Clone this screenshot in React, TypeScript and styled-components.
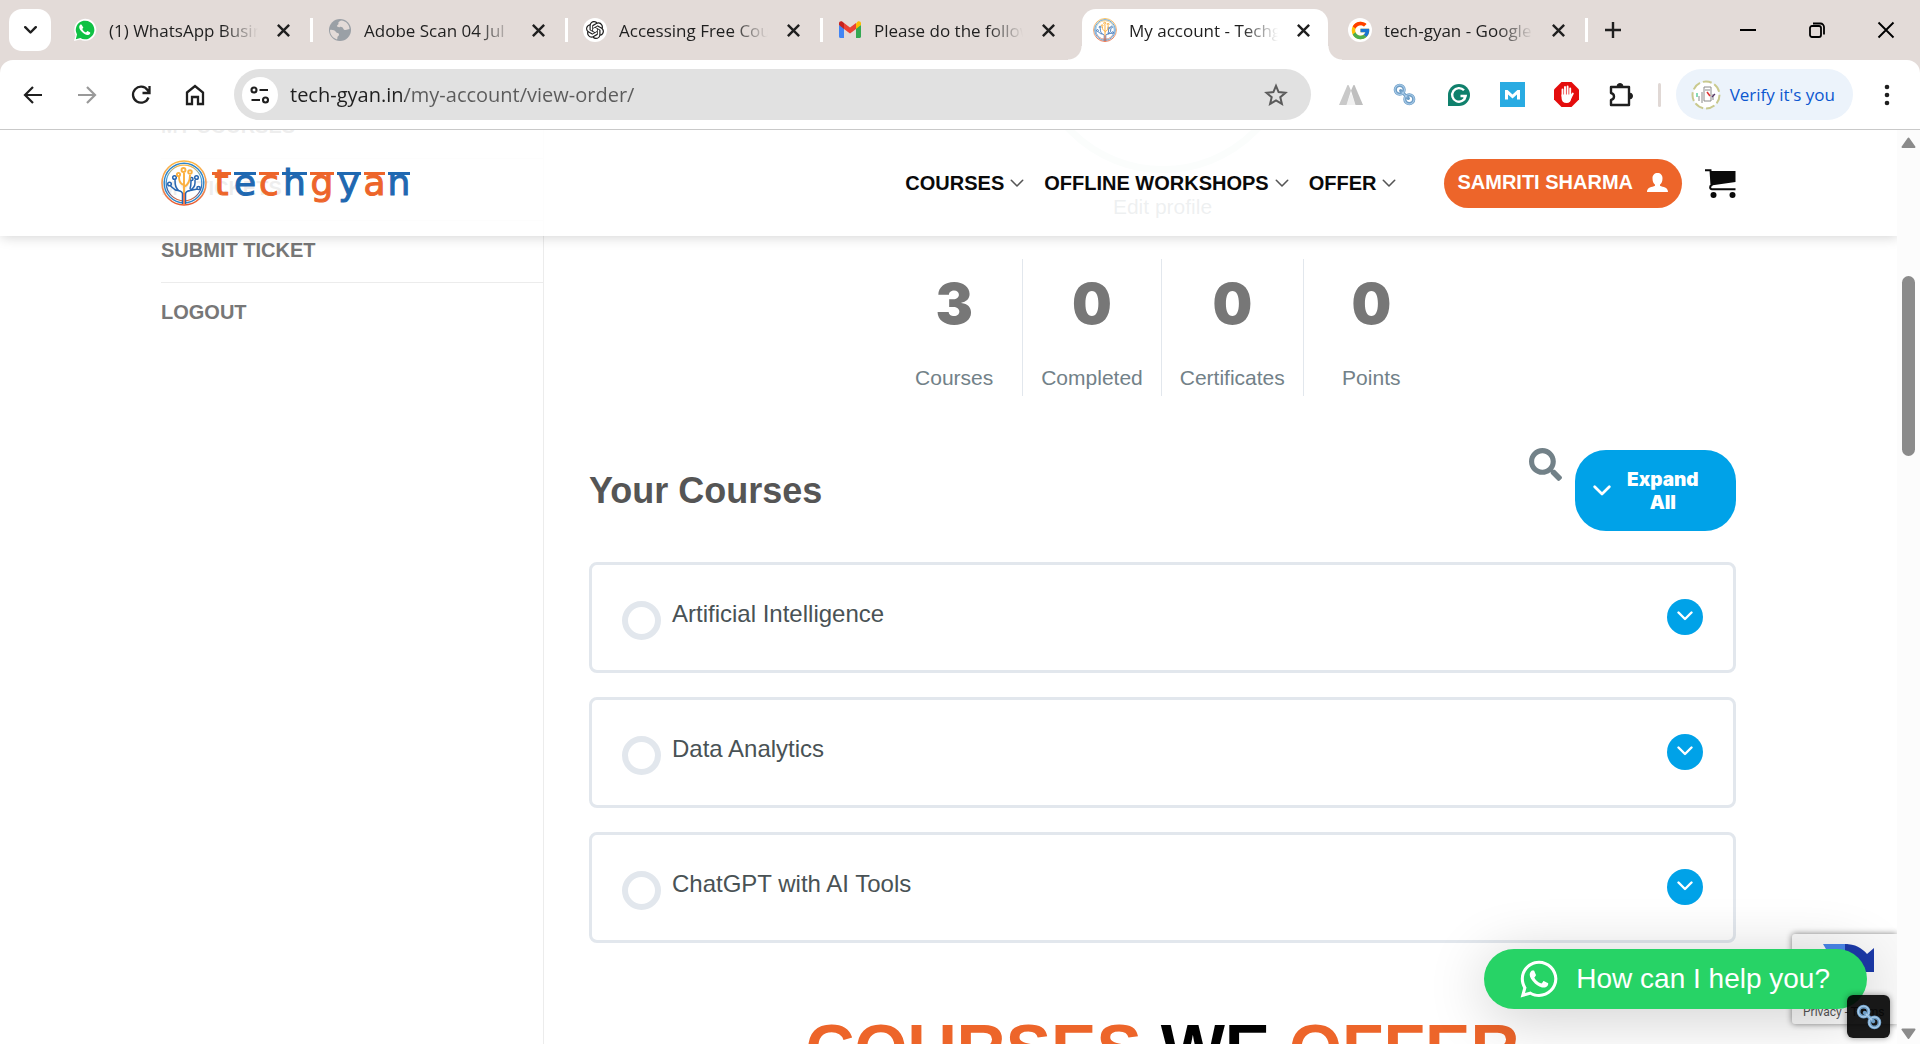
import React from "react";
import styled, { createGlobalStyle, css } from "styled-components";
import { FaWhatsapp, FaSearch } from "react-icons/fa";
import { SiOpenai } from "react-icons/si";
import { FcGoogle } from "react-icons/fc";

const uiFont = `"Open Sans", "Noto Sans", sans-serif`;
const pageFont = `"Liberation Sans", Arial, sans-serif`;
const heavyFont = `Inter, "Liberation Sans", sans-serif`;

const orange = "#ed652a";
const blue = "#1f68b1";
const sky = "#00a2e8";
const rule = "#e2e7ed";

const GlobalStyle = createGlobalStyle`
  *, *::before, *::after { box-sizing: border-box; }
  body { margin: 0; overflow: hidden; background: #fff; font-family: ${pageFont}; }
  button { border: 0; background: none; padding: 0; font: inherit; color: inherit; cursor: pointer; }
  a { color: inherit; text-decoration: none; }
  h1, h2, p, ul, dl, dd { margin: 0; padding: 0; }
  ul { list-style: none; }
  svg { display: block; flex: none; }
`;

const Window = styled.div`
  display: flex;
  flex-direction: column;
  height: 100vh;
  background: #e3dbd8;
`;

/* ---------- tab strip ---------- */

const TabStrip = styled.div`
  display: flex;
  align-items: flex-start;
  height: 60px;
  padding-left: 9px;
  color: #1f1f1f;
`;

const TabSearch = styled.button`
  display: grid;
  place-items: center;
  width: 42px;
  height: 42px;
  margin: 9px 6px 0 0;
  border-radius: 13px;
  background: #fff;
`;

const Tab = styled.div<{ $active?: boolean; $divider?: boolean }>`
  position: relative;
  display: flex;
  align-items: center;
  width: 255px;
  height: 51px;
  margin-top: 9px;
  padding: 0 17px 9px 16px;
  ${(p) =>
    p.$divider &&
    css`
      &::after {
        content: "";
        position: absolute;
        top: 9px;
        right: -1px;
        width: 3px;
        height: 24px;
        background: #fff;
      }
    `}
  ${(p) =>
    p.$active &&
    css`
      &::before {
        content: "";
        position: absolute;
        inset: 0 4px 0 5px;
        border-radius: 14px 14px 0 0;
        background: #fff;
      }
      &::after {
        content: "";
        position: absolute;
        bottom: 0;
        left: -9px;
        right: -10px;
        height: 14px;
        background: radial-gradient(circle at 0 0, transparent 13px, #fff 14px) left / 14px 14px no-repeat,
          radial-gradient(circle at 100% 0, transparent 13px, #fff 14px) right / 14px 14px no-repeat;
      }
      & > * {
        position: relative;
        z-index: 1;
      }
    `}
`;

const Favicon = styled.span`
  display: grid;
  place-items: center;
  width: 24px;
  height: 24px;
  margin-right: 12px;
`;

const Disc = styled.span`
  display: grid;
  place-items: center;
  width: 24px;
  height: 24px;
  border-radius: 50%;
  background: #fff;
`;

const TabTitle = styled.span`
  flex: 1;
  padding-top: 2px;
  overflow: hidden;
  white-space: nowrap;
  font: 17px/26px ${uiFont};
  mask-image: linear-gradient(to right, #000 calc(100% - 36px), transparent);
`;

const TabClose = styled.button`
  display: grid;
  place-items: center;
  width: 24px;
  height: 24px;
  margin-left: 13px;
`;

const StripButton = styled.button<{ $wide?: boolean }>`
  display: grid;
  place-items: center;
  width: ${(p) => (p.$wide ? 69 : 52)}px;
  height: 60px;
`;

const WindowControls = styled.div`
  display: flex;
  margin-left: auto;
  color: #000;
`;

/* ---------- toolbar ---------- */

const Toolbar = styled.div`
  display: flex;
  align-items: center;
  height: 70px;
  padding: 0 6px;
  border-bottom: 1px solid #c9c9c9;
  border-radius: 13px 13px 0 0;
  background: #fff;
  color: #1f1f1f;
`;

const ToolButton = styled.button<{ $muted?: boolean }>`
  display: grid;
  place-items: center;
  width: 54px;
  height: 51px;
  opacity: ${(p) => (p.$muted ? 0.45 : 1)};
`;

const Omnibox = styled.div`
  display: flex;
  align-items: center;
  flex: 1;
  height: 51px;
  margin: 0 13px 0 12px;
  padding: 0 8px;
  border-radius: 26px;
  background: #e1e1e1;
`;

const SiteInfo = styled.button`
  display: grid;
  place-items: center;
  width: 36px;
  height: 36px;
  margin-right: 12px;
  border-radius: 50%;
  background: #fff;
`;

const Address = styled.input`
  flex: 1;
  min-width: 0;
  padding: 0;
  border: 0;
  outline: 0;
  font: 20px/30px ${uiFont};
  color: #5b5b5b;
  background: linear-gradient(to right, #1f1f1f 115px, #5b5b5b 115px);
  background-clip: text;
  -webkit-text-fill-color: transparent;
`;

const ToolDivider = styled.span`
  width: 3px;
  height: 24px;
  margin: 0 15px 0 10px;
  border-radius: 2px;
  background: #e0d8d5;
`;

const ProfilePill = styled.button`
  display: flex;
  align-items: center;
  gap: 9px;
  height: 51px;
  margin-right: 7px;
  padding: 0 18px 0 15px;
  border-radius: 26px;
  background: #ecf3fb;
  color: #0b57d0;
  font: 17px/26px ${uiFont};
  white-space: nowrap;
`;

/* ---------- page ---------- */

const Viewport = styled.div`
  position: relative;
  display: flex;
  flex: 1;
  min-height: 0;
  background: #fff;
`;

const Page = styled.div`
  position: relative;
  flex: 1;
  min-width: 0;
  overflow: hidden;
`;

const SiteHeader = styled.header`
  position: absolute;
  inset: 0 0 auto 0;
  z-index: 2;
  background: rgba(255, 255, 255, 0.88);
  box-shadow: 1px 1px 12px rgba(0, 0, 0, 0.18);
`;

const Container = styled.div`
  display: flex;
  width: 100%;
  max-width: 1575px;
  margin: 0 auto;
`;

const HeaderInner = styled(Container)`
  align-items: center;
  height: 106px;
`;

const Brand = styled.a`
  display: flex;
  align-items: center;
  gap: 5px;
`;

const Wordmark = styled.span`
  display: flex;
  gap: 3px;
  font: 36px/46px "DejaVu Sans", sans-serif;
`;

const Letter = styled.span<{ $tone: string; $w: number }>`
  display: flex;
  justify-content: center;
  width: ${(p) => p.$w}px;
  color: ${(p) => p.$tone};
  -webkit-text-stroke: 1px ${(p) => p.$tone};
  background: linear-gradient(${(p) => p.$tone}, ${(p) => p.$tone}) 0 12px / 100% 3px no-repeat;
`;

const MainNav = styled.nav`
  margin-left: auto;

  ul {
    display: flex;
    gap: 20px;
  }
`;

const NavLink = styled.a`
  display: flex;
  align-items: center;
  gap: 6px;
  font-size: 20px;
  line-height: 24px;
  font-weight: 700;
  color: #0a0a0a;
`;

const AccountLink = styled.a`
  display: flex;
  align-items: center;
  gap: 14px;
  height: 49px;
  margin: 0 23px 0 48px;
  padding: 0 14px 2px 13px;
  border-radius: 25px;
  background: ${orange};
  color: #fff;
  font-size: 20px;
  line-height: 24px;
  font-weight: 700;
`;

/* The page is scrolled down, so its first part sits above the viewport. */
const Body = styled(Container)`
  margin-top: -223px;
`;

const Sidebar = styled.nav`
  flex: 0 0 383px;
  min-height: 1300px;
  padding-top: 190px;
  border-right: 1px solid #ececec;
`;

const SideItem = styled.li`
  display: flex;
  align-items: center;
  height: 62px;
  padding-bottom: 4px;
  border-bottom: 1px solid #ececec;
  font-size: 20px;
  line-height: 24px;
  font-weight: 700;
  color: #777;

  &:last-child {
    border-bottom: 0;
  }
`;

const Main = styled.main`
  flex: 1;
  min-width: 0;
  padding-left: 45px;
`;

const Profile = styled.section`
  display: flex;
  flex-direction: column;
  align-items: center;
`;

const Avatar = styled.div`
  width: 266px;
  height: 266px;
  border: 7px solid #d8e8e5;
  border-radius: 50%;
`;

const EditLink = styled.a`
  margin: 22px 0 40px;
  font-size: 21px;
  line-height: 24px;
  color: #728188;
`;

const Stats = styled.dl`
  display: flex;
`;

const Stat = styled.div`
  display: flex;
  flex-direction: column-reverse;
  justify-content: flex-end;
  min-width: 136px;
  height: 137px;
  padding: 0 18px;
  text-align: center;

  & + & {
    border-left: 1px solid ${rule};
  }
`;

const StatValue = styled.dd`
  font: 900 56px/90px ${heavyFont};
  color: #777;
`;

const StatLabel = styled.dt`
  padding-top: 13px;
  font-size: 21px;
  line-height: 32px;
  color: #728188;
`;

const CoursesHead = styled.div`
  display: flex;
  align-items: center;
  margin: 52px 0 29px;
`;

const CoursesTitle = styled.h2`
  flex: 1;
  font-size: 36px;
  line-height: 48px;
  color: #555;
`;

const SearchButton = styled.button`
  margin: 0 13px 52px 0;
  color: #728188;
`;

const ExpandAll = styled.button`
  display: flex;
  align-items: center;
  gap: 16px;
  width: 161px;
  height: 81px;
  padding: 0 34px 0 18px;
  border-radius: 31px;
  background: ${sky};
  color: #fff;
  font: 900 19px/23px ${heavyFont};
`;

const CourseList = styled.ul`
  display: grid;
  gap: 24px;
`;

const CourseCard = styled.li`
  display: flex;
  align-items: center;
  height: 111px;
  padding: 0 30px;
  border: 3px solid ${rule};
  border-radius: 8px;
`;

const Progress = styled.span`
  width: 39px;
  height: 39px;
  margin: 6px 11px 0 0;
  border: 6px solid #e2e7ed;
  border-radius: 50%;
`;

const CourseLink = styled.a`
  flex: 1;
  padding-bottom: 8px;
  font-size: 24px;
  line-height: 32px;
  color: #495255;
`;

const Toggle = styled.button`
  display: grid;
  place-items: center;
  width: 36px;
  height: 36px;
  margin-bottom: 2px;
  padding-bottom: 2px;
  border-radius: 50%;
  background: ${sky};
  color: #fff;
`;

const OfferTitle = styled.h1`
  margin-top: 66px;
  font-size: 68px;
  line-height: 78px;
  text-align: center;
  white-space: nowrap;
  color: ${orange};

  em {
    font-style: normal;
    color: #000;
  }
`;

/* ---------- floating widgets ---------- */

const Captcha = styled.aside`
  position: absolute;
  right: 0;
  bottom: 20px;
  z-index: 3;
  display: flex;
  flex-direction: column;
  justify-content: space-between;
  width: 105px;
  height: 90px;
  padding: 10px 11px 3px;
  border-radius: 3px 0 0 3px;
  background: #f9f9f9;
  box-shadow: 0 0 6px #808080;
  font: 12px/18px Roboto, sans-serif;
  color: #555;
  white-space: nowrap;

  svg {
    margin-left: 20px;
  }
`;

const ChatButton = styled.button`
  position: absolute;
  right: 30px;
  bottom: 35px;
  z-index: 4;
  display: flex;
  align-items: center;
  gap: 16px;
  height: 60px;
  padding: 0 37px 0 34px;
  border-radius: 30px;
  background: #27d366;
  box-shadow: 0 8px 60px rgba(0, 0, 0, 0.2);
  color: #fff;
  font-size: 28px;
  line-height: 32px;
  white-space: nowrap;
`;

const LinkBadge = styled.button`
  position: absolute;
  right: 7px;
  bottom: 6px;
  z-index: 5;
  display: grid;
  place-items: center;
  width: 43px;
  height: 43px;
  border-radius: 6px;
  background: rgba(0, 0, 0, 0.9);
  box-shadow: 0 0 6px rgba(0, 0, 0, 0.4);
`;

const ScrollBar = styled.div`
  display: flex;
  flex-direction: column;
  align-items: center;
  width: 23px;
  padding: 7px 0 5px;
  background: #fcfcfc;
`;

const Thumb = styled.span`
  flex: 180 0 0;
  width: 13px;
  border-radius: 7px;
  background: #8b8b8b;
`;

const Track = styled.span<{ $share: number }>`
  flex: ${(p) => p.$share} 0 0;
`;

/* ---------- drawings ---------- */

const line = { fill: "none", stroke: "currentColor" } as const;

const Chevron = ({ w, stroke = 2, color = "currentColor" }: { w: number; stroke?: number; color?: string }) => (
  <svg width={w} height={(w * 10) / 16} viewBox="0 0 16 10" fill="none" stroke={color} strokeWidth={stroke} strokeLinecap="round" strokeLinejoin="round">
    <path d="M1.5 1.5 8 8l6.500-6.500" />
  </svg>
);

const Cross = ({ size, stroke }: { size: number; stroke: number }) => (
  <svg width={size} height={size} viewBox="0 0 16 16" {...line} strokeWidth={stroke}>
    <path d="M2 2l12 12M14 2 2 14" />
  </svg>
);

const WhatsAppMark = () => (
  <svg width="24" height="24" viewBox="0 0 24 24">
    <path d="M1 23l1.600-6A11 11 0 1 1 7 21.400z" fill="#fff" />
    <path d="M2.800 21.200 4 16.600A9.300 9.300 0 1 1 7.400 20z" fill="#0fc144" />
    <path d="M8.600 6.800c-.4-.5-1-.4-1.400 0-2 2-.6 4.700 1.600 7s4.900 3.900 7 3c1.400-.7 1.600-1.600 1.400-2.300l-2.700-1.400c-.5 0-1 1.300-1.500 1.300-1.200-.2-3.400-2.300-3.700-3.500 0-.5 1-1 1-1.500z" fill="#fff" />
  </svg>
);

const GlobeMark = () => (
  <svg width="24" height="24" viewBox="0 0 24 24">
    <circle cx="12" cy="12" r="11" fill="#9aa0a6" />
    <path d="M13 2.500c-1 1-3 1-2.500 3 .2 1.300-1.500 1-1.500 2.500 0 1 2 1.500 3 1s3 .5 3.500 2 3 1 4 .5l2-.5c0-4-3-8-8.500-8.500zM2 12c2-.5 5 .5 6 2s3 .5 3 2.500-2 1.500-1.500 3.500l-.5 1.500C5 20 2 17 2 12z" fill="#e3dbd8" />
  </svg>
);

const GmailMark = () => (
  <svg width="24" height="24" viewBox="0 0 24 24">
    <path d="M1 7v11.500c0 .8.600 1.500 1.500 1.500H6V9z" fill="#4285f4" />
    <path d="M18 9v11h3.500c.9 0 1.500-.7 1.500-1.500V7z" fill="#34a853" />
    <path d="M18 5.500V11l5-4V5.500c0-2-2-2.800-3.500-1.700z" fill="#fbbc04" />
    <path d="M6 11V5l6 4.500L18 5v6l-6 4.500z" fill="#ea4335" />
    <path d="M1 5.500V7l5 4V5L4.500 3.800C3 2.700 1 3.500 1 5.500z" fill="#c5221f" />
  </svg>
);

const TreeMark = ({ size }: { size: number }) => (
  <svg width={size} height={size} viewBox="0 0 46 46" fill="none">
    <defs>
      <linearGradient id="ring" x1="0" y1="0" x2="0" y2="1">
        <stop offset="0" stopColor="#fbb743" />
        <stop offset=".35" stopColor="#4aa3dc" />
        <stop offset=".7" stopColor="#2a5fb0" />
        <stop offset="1" stopColor="#ed652a" />
      </linearGradient>
      <linearGradient id="outer" x1="0" y1="0" x2="0" y2="1">
        <stop offset="0" stopColor="#fbb743" />
        <stop offset=".6" stopColor="#f0935a" />
        <stop offset="1" stopColor="#e8582f" />
      </linearGradient>
    </defs>
    <circle cx="23" cy="23" r="22" stroke="url(#outer)" strokeWidth="1.600" />
    <circle cx="23" cy="23" r="19.800" stroke="#2f86c9" strokeWidth="1.400" />
    <circle cx="23" cy="23" r="17.800" stroke="url(#ring)" strokeWidth="1.200" />
    <g stroke="#2765b0" strokeWidth="1.500">
      <path d="M21.500 44V34c0-4-5-3-7-4l-5-4M24.500 44V34c0-4 5-3 7-4l5-1M18 31c-3-3-4-5-4-11M28 31c4-2 6-4 6-8v-3M29 29c1-3 1-5 1-8" />
      <circle cx="8.500" cy="24" r="1.800" />
      <circle cx="13.500" cy="17.500" r="1.800" />
      <circle cx="37.500" cy="28" r="1.600" />
      <circle cx="35.500" cy="17.500" r="1.800" />
      <circle cx="30.500" cy="19" r="1.500" />
    </g>
    <g stroke="#fbb040" strokeWidth="1.900">
      <path d="M23 34V13M23 25c-4-1-5-4-5-8M23 27c4-2 6-6 6-12" />
      <circle cx="22.500" cy="10" r="2" />
      <circle cx="17.500" cy="14.500" r="1.600" />
      <circle cx="29" cy="12" r="1.800" />
    </g>
    <path d="M23 33v12" stroke="#ef7d4d" strokeWidth="2" />
  </svg>
);

const ChainMark = ({ size }: { size: number }) => (
  <svg width={size} height={size} viewBox="0 0 24 24" fill="none">
    <g stroke="#6d9dc6" strokeWidth="3.400">
      <circle cx="7" cy="7" r="4.600" />
      <circle cx="17" cy="17" r="4.600" />
      <path d="m8 8 8 8" strokeLinecap="round" />
    </g>
    <g stroke="#a9cbe8" strokeWidth="1.200">
      <circle cx="7" cy="7" r="5" />
      <circle cx="17" cy="17" r="5" />
      <path d="m9 9 6 6" />
    </g>
  </svg>
);

const StarMark = () => (
  <svg width="24" height="24" viewBox="0 0 24 24" {...line} strokeWidth="2" color="#5b5b5b">
    <path d="m12 2.800 2.600 6.300 6.900.6-5.200 4.500 1.600 6.700L12 17.300l-5.900 3.600 1.600-6.700-5.200-4.500 6.900-.6z" />
  </svg>
);

const SlopesMark = () => (
  <svg width="24" height="22" viewBox="0 0 24 22">
    <path d="M12 9 7.500 21h9z" fill="#f1f1f1" />
    <path d="M8.500 1h1L12 6.500 7.500 21H0z" fill="#c9c9c9" />
    <path d="M15.500 1h-1L12 6.500 16.500 21H24z" fill="#bfbfbf" />
  </svg>
);

const GrammarMark = () => (
  <svg width="24" height="24" viewBox="0 0 24 24">
    <path d="M1 23V12A11 11 0 1 1 12 23z" fill="#0f806c" />
    <path d="M17 7.300A6.800 6.800 0 1 0 18.700 13H13.500M17.500 15.500v-2.500" fill="none" stroke="#fff" strokeWidth="2.300" />
  </svg>
);

const PeaksMark = () => (
  <svg width="25" height="25" viewBox="0 0 25 25">
    <path d="M0 0h25v25H0z" fill="#29abe2" />
    <path d="M5 17.500V8h2.600l4.900 4.500L17.400 8H20v9.500h-3v-5L12.500 16.500 8 12.500v5z" fill="#fff" />
  </svg>
);

const StopHandMark = () => (
  <svg width="25" height="25" viewBox="0 0 25 25">
    <path d="M7.500 0h10L25 7.500v10L17.500 25h-10L0 17.500v-10z" fill="#e40d0d" />
    <g stroke="#fff" strokeWidth="1.900" strokeLinecap="round" fill="none">
      <path d="M8.500 14V7.500M11 13V5M13.600 13V4.500M16.200 14V6.500M18.800 11.500 16 17" />
    </g>
    <path d="M7.550 12.500h9.600v4c0 2.600-1.600 4.500-4.500 4.500-3.300 0-5.100-2-5.100-5z" fill="#fff" />
  </svg>
);

const PuzzleMark = () => (
  <svg width="26" height="26" viewBox="0 0 26 26" {...line} strokeWidth="2.400" strokeLinejoin="round">
    <path d="M3 5h18v18H3v-5c4-1 4-6 0-7z" />
    <path d="M9 4.500a3 3 0 0 1 6 0zM21.500 11a3 3 0 0 1 0 6z" fill="currentColor" strokeWidth="1" />
  </svg>
);

const AvatarMark = () => (
  <svg width="30" height="30" viewBox="0 0 30 30" fill="none">
    <circle cx="15" cy="15" r="13" fill="#fff" />
    <circle cx="15" cy="15" r="13.500" stroke="#c9c98e" strokeWidth="2" strokeDasharray="9 3" />
    <path d="M13 7h7v14h-7zM11 23V12M14 10h5M8 21v-5M22 20v-6" stroke="#8a8a8a" strokeWidth="1" />
    <path d="m16 12 3 4" stroke="#d33" strokeWidth="1.600" />
    <path d="M6 13v4" stroke="#5c9" strokeWidth="1.400" />
    <path d="m21 17 3-3" stroke="#536" strokeWidth="1.200" />
  </svg>
);

const CartMark = () => (
  <svg width="31" height="29" viewBox="0 0 31 29" fill="#0a0a0a">
    <path d="M5.500 2h25v11L6 16.500z" />
    <path d="M0 1.200h5.500l1 15c-2 .6-1.800 4 .5 4h23.500" fill="none" stroke="#0a0a0a" strokeWidth="2" />
    <circle cx="8.500" cy="26" r="3" />
    <circle cx="27.500" cy="26" r="3" />
  </svg>
);

const PersonMark = () => (
  <svg width="21" height="19" viewBox="0 0 21 19" fill="#fff">
    <path d="M10.500 0c3 0 5 2 5 5.200 0 3.300-1 5-2.400 6.300-.4 1 0 1.500 1 1.800 4 1 6.900 2 6.900 5.700H0c0-3.700 2.900-4.700 6.900-5.700 1-.3 1.400-.8 1-1.800-1.400-1.300-2.400-3-2.400-6.300C5.500 2 7.500 0 10.500 0z" />
  </svg>
);

const CaptchaMark = () => (
  <svg width="51" height="44" viewBox="0 0 51 44">
    <path d="M0 0h25v13C19 13 15 17 13 22z" fill="#4a86ea" />
    <path d="M22 0c10 0 17 4 22 10l7-6v24H28l8-8c-3-5-8-8-14-8z" fill="#1c3aa9" />
    <path d="M0 22h12c0 8 4 12 10 12s8-2 10-5l8 8c-5 5-11 7-18 7C8 44 0 34 0 22z" fill="#ababab" />
  </svg>
);

const Arrow = ({ down }: { down?: boolean }) => (
  <svg width="15" height="11" viewBox="0 0 15 11" fill="#8b8b8b" stroke="#8b8b8b" strokeWidth="2" strokeLinejoin="round">
    <path d={down ? "M1.500 1.500h12L7.500 10z" : "M7.500 1.500l6 8.500h-12z"} />
  </svg>
);

/* ---------- data ---------- */

const tabs = [
  { title: "(1) WhatsApp Business", icon: <WhatsAppMark />, divider: true },
  { title: "Adobe Scan 04 Jul", icon: <GlobeMark />, divider: true },
  { title: "Accessing Free Course", icon: <Disc><SiOpenai size={18} /></Disc>, divider: true },
  { title: "Please do the following", icon: <GmailMark /> },
  { title: "My account - Techgyan", icon: <TreeMark size={24} />, active: true },
  { title: "tech-gyan - Google", icon: <Disc><FcGoogle size={21} /></Disc>, divider: true },
];

const extensions = [
  { name: "Slopes", icon: <SlopesMark /> },
  { name: "Link", icon: <ChainMark size={23} /> },
  { name: "Grammar", icon: <GrammarMark /> },
  { name: "Mail", icon: <PeaksMark /> },
  { name: "Ad block", icon: <StopHandMark /> },
  { name: "Extensions", icon: <PuzzleMark /> },
];

const letters: [string, number][] = [
  ["t", 19], ["e", 22], ["c", 20], ["h", 25], ["g", 24], ["y", 24], ["a", 21], ["n", 22],
];

const stats: [string, string][] = [
  ["Courses", "3"],
  ["Completed", "0"],
  ["Certificates", "0"],
  ["Points", "0"],
];

const courses = ["Artificial Intelligence", "Data Analytics", "ChatGPT with AI Tools"];

export default function App() {
  return (
    <Window>
      <GlobalStyle />
      <TabStrip>
        <TabSearch aria-label="Search tabs"><Chevron w={13} stroke={3} /></TabSearch>
        {tabs.map((t) => (
          <Tab key={t.title} $active={t.active} $divider={t.divider}>
            <Favicon>{t.icon}</Favicon>
            <TabTitle>{t.title}</TabTitle>
            <TabClose aria-label="Close tab"><Cross size={15} stroke={2.6} /></TabClose>
          </Tab>
        ))}
        <StripButton aria-label="New tab">
          <svg width="16" height="16" viewBox="0 0 16 16" {...line} strokeWidth="2.400"><path d="M8 0v16M0 8h16" /></svg>
        </StripButton>
        <WindowControls>
          <StripButton $wide aria-label="Minimize">
            <svg width="16" height="2" viewBox="0 0 16 2" {...line} strokeWidth="2"><path d="M0 1h16" /></svg>
          </StripButton>
          <StripButton $wide aria-label="Restore">
            <svg width="16" height="16" viewBox="0 0 16 16" {...line} strokeWidth="1.800">
              <rect x="1" y="4" width="11" height="11" rx="2" />
              <path d="M4 1.500h7.500a3.500 3.500 0 0 1 3.500 3.500v7.500" />
            </svg>
          </StripButton>
          <StripButton $wide aria-label="Close"><Cross size={20} stroke={1.5} /></StripButton>
        </WindowControls>
      </TabStrip>

      <Toolbar>
        <ToolButton aria-label="Back">
          <svg width="20" height="18" viewBox="0 0 20 18" {...line} strokeWidth="2.200"><path d="M19 9H2M10 1 2 9l8 8" /></svg>
        </ToolButton>
        <ToolButton aria-label="Forward" $muted>
          <svg width="20" height="18" viewBox="0 0 20 18" {...line} strokeWidth="2.200"><path d="M1 9h17M10 1l8 8-8 8" /></svg>
        </ToolButton>
        <ToolButton aria-label="Reload">
          <svg width="20" height="20" viewBox="0 0 20 20" {...line} strokeWidth="2.300">
            <path d="M17.500 12.500A8 8 0 1 1 16.500 5l1.500 2M18.500 1v7h-7" />
          </svg>
        </ToolButton>
        <ToolButton aria-label="Home">
          <svg width="20" height="22" viewBox="0 0 20 22" {...line} strokeWidth="2.300">
            <path d="M2 8.500 10 2l8 6.500V20h-5v-7H7v7H2z" />
          </svg>
        </ToolButton>
        <Omnibox>
          <SiteInfo aria-label="Site information">
            <svg width="20" height="18" viewBox="0 0 20 18" {...line} strokeWidth="2.100">
              <circle cx="4" cy="4" r="2.500" /><path d="M9.500 4H18M1.500 14H10" /><circle cx="15.500" cy="14" r="2.500" />
            </svg>
          </SiteInfo>
          <Address aria-label="Address" defaultValue="tech-gyan.in/my-account/view-order/" />
          <ToolButton aria-label="Bookmark"><StarMark /></ToolButton>
        </Omnibox>
        {extensions.map((e) => (
          <ToolButton key={e.name} aria-label={e.name}>{e.icon}</ToolButton>
        ))}
        <ToolDivider />
        <ProfilePill><AvatarMark />Verify it's you</ProfilePill>
        <ToolButton aria-label="Menu">
          <svg width="6" height="22" viewBox="0 0 6 22" fill="currentColor">
            <circle cx="3" cy="3" r="2.300" /><circle cx="3" cy="11" r="2.300" /><circle cx="3" cy="19" r="2.300" />
          </svg>
        </ToolButton>
      </Toolbar>

      <Viewport>
        <Page>
          <SiteHeader>
            <HeaderInner>
              <Brand href="#home">
                <TreeMark size={46} />
                <Wordmark>
                  {letters.map(([ch, w], i) => (
                    <Letter key={ch} $w={w} $tone={i % 2 ? blue : orange}>{ch}</Letter>
                  ))}
                </Wordmark>
              </Brand>
              <MainNav aria-label="Main">
                <ul>
                  {["COURSES", "OFFLINE WORKSHOPS", "OFFER"].map((n) => (
                    <li key={n}><NavLink href="#nav">{n}<Chevron w={14} stroke={1.8} color="#555" /></NavLink></li>
                  ))}
                </ul>
              </MainNav>
              <AccountLink href="#account">SAMRITI SHARMA<PersonMark /></AccountLink>
              <a href="#cart" aria-label="Cart"><CartMark /></a>
            </HeaderInner>
          </SiteHeader>

          <Body>
            <Sidebar aria-label="Account">
              <ul>
                {["MY COURSES", "MY TICKETS", "SUBMIT TICKET", "LOGOUT"].map((s) => (
                  <SideItem key={s}><a href="#side">{s}</a></SideItem>
                ))}
              </ul>
            </Sidebar>
            <Main>
              <Profile>
                <Avatar />
                <EditLink href="#edit">Edit profile</EditLink>
                <Stats>
                  {stats.map(([label, value]) => (
                    <Stat key={label}>
                      <StatLabel>{label}</StatLabel>
                      <StatValue>{value}</StatValue>
                    </Stat>
                  ))}
                </Stats>
              </Profile>
              <CoursesHead>
                <CoursesTitle>Your Courses</CoursesTitle>
                <SearchButton aria-label="Search courses"><FaSearch size={33} /></SearchButton>
                <ExpandAll><Chevron w={18} stroke={2.4} /><span>Expand<br />All</span></ExpandAll>
              </CoursesHead>
              <CourseList>
                {courses.map((c) => (
                  <CourseCard key={c}>
                    <Progress />
                    <CourseLink href="#course">{c}</CourseLink>
                    <Toggle aria-label={`Expand ${c}`}><Chevron w={16} stroke={2.4} /></Toggle>
                  </CourseCard>
                ))}
              </CourseList>
              <OfferTitle>COURSES <em>WE</em> OFFER</OfferTitle>
            </Main>
          </Body>

          <Captcha><CaptchaMark /><span>Privacy - Terms</span></Captcha>
          <ChatButton><FaWhatsapp size={42} />How can I help you?</ChatButton>
          <LinkBadge aria-label="Copy link"><ChainMark size={26} /></LinkBadge>
        </Page>
        <ScrollBar>
          <Arrow />
          <Track $share={128} />
          <Thumb />
          <Track $share={572} />
          <Arrow down />
        </ScrollBar>
      </Viewport>
    </Window>
  );
}
